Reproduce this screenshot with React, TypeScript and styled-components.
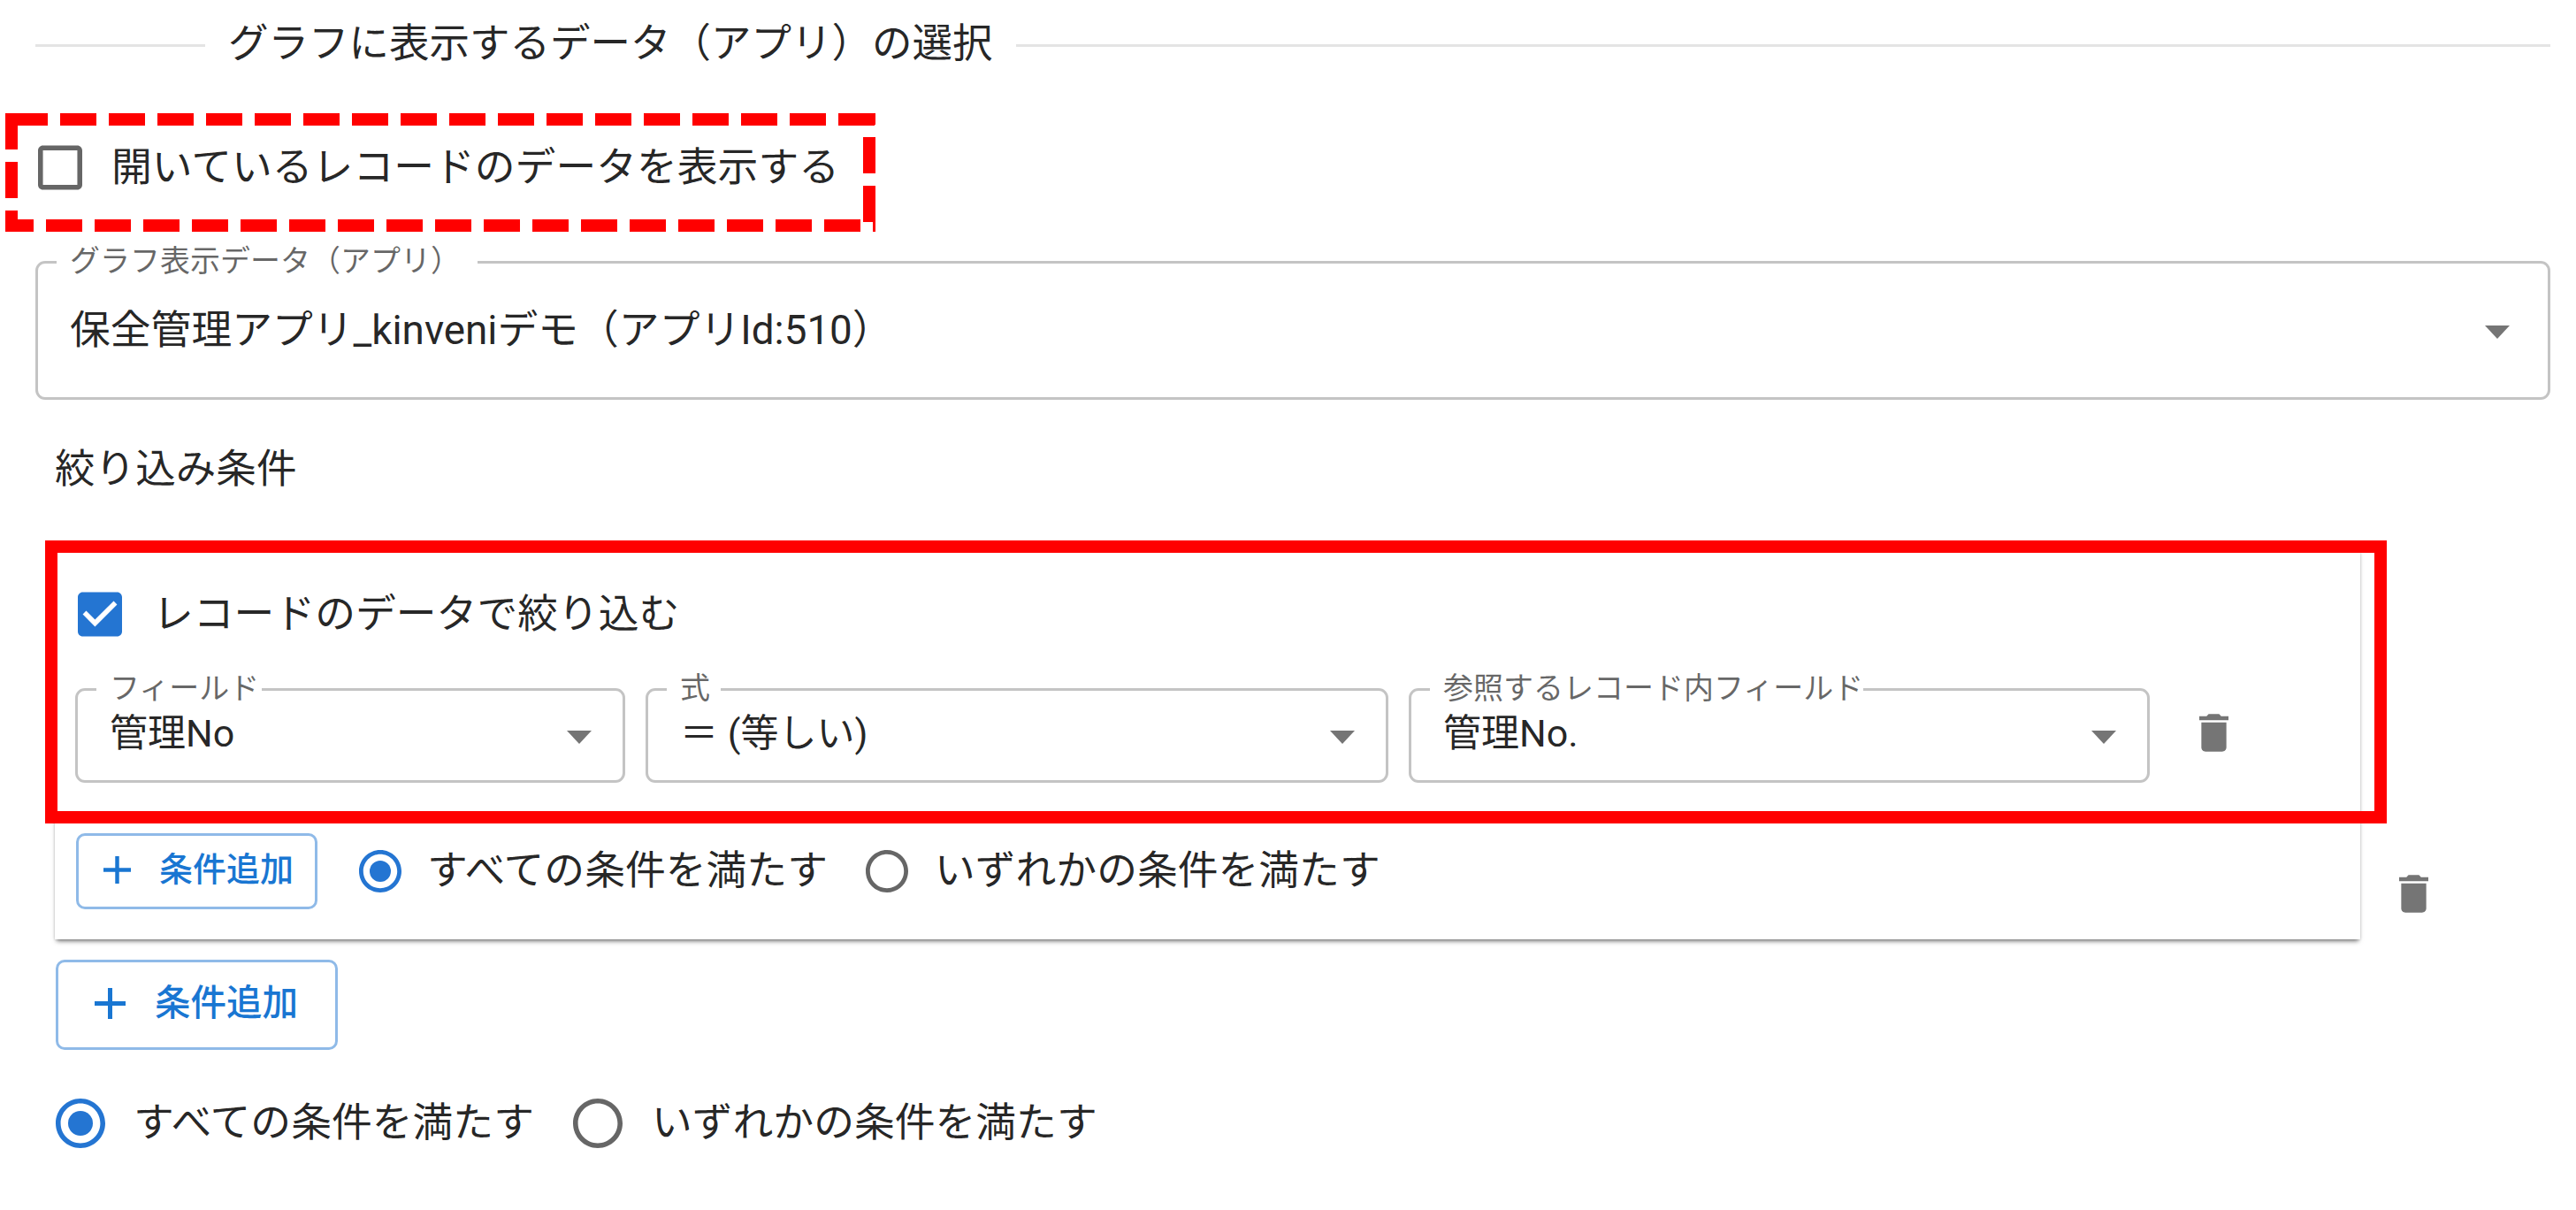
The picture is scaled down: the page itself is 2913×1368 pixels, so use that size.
import React from "react";
import styled, { createGlobalStyle } from "styled-components";

const GlobalStyle = createGlobalStyle`
  html, body {
    margin: 0;
    padding: 0;
    background: #fff;
  }
  body {
    font-family: Roboto, "Noto Sans CJK JP", "Noto Sans", sans-serif;
    color: rgba(0, 0, 0, 0.87);
  }
`;

const Page = styled.div`
  width: 2913px;
  height: 1368px;
  box-sizing: border-box;
  padding: 0 29px 0 40px;
  overflow: hidden;
  display: flex;
  flex-direction: column;
`;

const SectionHeader = styled.div`
  height: 102px;
  display: flex;
  align-items: center;
`;

const HeaderLine = styled.div<{ $grow?: boolean }>`
  height: 3px;
  background: #e4e4e4;
  flex: ${(p) => (p.$grow ? "1" : "0 0 192px")};
`;

const HeaderTitle = styled.span`
  padding: 0 26px 12px;
  font-size: 45.5px;
  white-space: nowrap;
`;

const DashedFrame = styled.div`
  align-self: flex-start;
  margin: 26px 0 0 -34px;
  width: 984px;
  height: 134px;
  box-sizing: border-box;
  padding: 0 0 11px 37px;
  display: flex;
  align-items: center;
  gap: 33px;
  background:
    repeating-linear-gradient(90deg, #f00 7px, #f00 48px, transparent 48px, transparent 62px) top left / 100% 14px no-repeat,
    repeating-linear-gradient(90deg, #f00 -9px, #f00 32px, transparent 32px, transparent 46px) bottom left / 100% 14px no-repeat,
    repeating-linear-gradient(180deg, #f00 0, #f00 41px, transparent 41px, transparent 55px) top left / 14px 100% no-repeat,
    repeating-linear-gradient(180deg, #f00 27px, #f00 68px, transparent 68px, transparent 82px) top right / 14px 100% no-repeat;
`;

const Label = styled.span`
  font-size: 45.8px;
  line-height: 46px;
  white-space: nowrap;
`;

const MainFieldWrap = styled.div`
  margin-top: 33px;
`;

const SelectBox = styled.div<{ $width?: number; $height: number; $padRight: number }>`
  position: relative;
  box-sizing: border-box;
  flex: none;
  width: ${(p) => (p.$width ? `${p.$width}px` : "auto")};
  height: ${(p) => p.$height}px;
  border: 3px solid #c4c4c4;
  border-radius: 11px;
  padding: 0 ${(p) => p.$padRight - 3}px 0 36px;
  display: flex;
  align-items: center;
  justify-content: space-between;
`;

const FloatingLabel = styled.span<{ $notchRight: number }>`
  position: absolute;
  left: 21px;
  top: -26px;
  padding: 0 ${(p) => p.$notchRight}px 0 15px;
  background: linear-gradient(#fff, #fff) bottom / 100% 50% no-repeat;
  font-size: 34px;
  line-height: 46px;
  color: rgba(0, 0, 0, 0.6);
  white-space: nowrap;
`;

const SelectValue = styled.span<{ $size: number; $lift: number }>`
  font-size: ${(p) => p.$size}px;
  line-height: 50px;
  padding-bottom: ${(p) => p.$lift}px;
  white-space: nowrap;
`;

const Caret = styled.span`
  flex: none;
  width: 0;
  height: 0;
  margin-top: 3px;
  border-left: 14.5px solid transparent;
  border-right: 14.5px solid transparent;
  border-top: 15px solid #757575;
`;

const Heading = styled.div`
  margin: 49px 0 0 22px;
  height: 60px;
  line-height: 60px;
  font-size: 45.6px;
`;

const RuleRow = styled.div`
  margin: 59px 0 0 22px;
  display: flex;
  gap: 44px;
`;

const RuleCard = styled.div`
  position: relative;
  box-sizing: border-box;
  width: 2607px;
  height: 442px;
  padding: 49px 0 0 26px;
  background: #fff;
  box-shadow: 0 4px 5px -2px rgba(0, 0, 0, 0.55), 0 0 3px rgba(0, 0, 0, 0.14);
  display: flex;
  flex-direction: column;
`;

const RedFrame = styled.div`
  position: absolute;
  left: -11px;
  right: -30px;
  top: -9px;
  height: 320px;
  box-sizing: border-box;
  border: 14px solid #f00;
  pointer-events: none;
`;

const CheckRow = styled.div`
  display: flex;
  align-items: center;
  gap: 35px;
  height: 51px;
`;

const SelectRow = styled.div`
  margin: 58px 0 0 -3px;
  display: flex;
  align-items: center;
  gap: 23px;
`;

const TrashButton = styled.span<{ $outer?: boolean }>`
  flex: none;
  display: flex;
  align-self: ${(p) => (p.$outer ? "flex-end" : "center")};
  margin: ${(p) => (p.$outer ? "0 0 30px 0" : "0 0 6px 33px")};
`;

const ActionRow = styled.div`
  margin: 57px 0 0 -2px;
  display: flex;
  align-items: center;
`;

const AddButton = styled.div<{ $width: number; $height: number; $pad: number; $gap: number; $size: number }>`
  flex: none;
  box-sizing: border-box;
  width: ${(p) => p.$width}px;
  height: ${(p) => p.$height}px;
  padding: 0 0 3px ${(p) => p.$pad}px;
  border: 3px solid #8fbae8;
  border-radius: 10px;
  display: flex;
  align-items: center;
  gap: ${(p) => p.$gap}px;
  color: #1976d2;
  font-size: ${(p) => p.$size}px;
  font-weight: 500;
  white-space: nowrap;
`;

const ButtonText = styled.span`
  line-height: 46px;
  padding-bottom: 1px;
`;

const OuterAddWrap = styled.div`
  margin: 23px 0 0 23px;
`;

const RadioGroup = styled.div<{ $left: number; $top: number }>`
  margin: ${(p) => p.$top}px 0 0 ${(p) => p.$left}px;
  display: flex;
  align-items: center;
`;

const RadioItem = styled.div<{ $gap: number; $after: number }>`
  display: flex;
  align-items: center;
  gap: ${(p) => p.$gap}px;
  margin-right: ${(p) => p.$after}px;
`;

const CheckIcon: React.FC<{ checked?: boolean }> = ({ checked }) =>
  checked ? (
    <svg width="50" height="51" viewBox="3 3 18 18" fill="#2475d2">
      <path d="M19 3H5c-1.11 0-2 .9-2 2v14c0 1.1.89 2 2 2h14c1.11 0 2-.9 2-2V5c0-1.1-.89-2-2-2zm-9 14l-5-5 1.41-1.41L10 14.17l7.59-7.59L19 8l-9 9z" />
    </svg>
  ) : (
    <svg width="50" height="51" viewBox="3 3 18 18" fill="#666">
      <path d="M19 5v14H5V5h14m0-2H5c-1.1 0-2 .9-2 2v14c0 1.1.9 2 2 2h14c1.1 0 2-.9 2-2V5c0-1.1-.9-2-2-2z" />
    </svg>
  );

const RadioIcon: React.FC<{ checked?: boolean; size: number }> = ({ checked, size }) => (
  <svg width={size} height={size} viewBox="2 2 20 20" fill={checked ? "#2475d2" : "#666"}>
    <path d="M12 2C6.48 2 2 6.48 2 12s4.48 10 10 10 10-4.48 10-10S17.52 2 12 2zm0 18c-4.42 0-8-3.58-8-8s3.58-8 8-8 8 3.58 8 8-3.58 8-8 8z" />
    {checked && <circle cx="12" cy="12" r="5" />}
  </svg>
);

const PlusIcon: React.FC<{ size: number }> = ({ size }) => (
  <svg width={size} height={size} viewBox="5 5 14 14" fill="currentColor">
    <path d="M19 13h-6v6h-2v-6H5v-2h6V5h2v6h6v2z" />
  </svg>
);

const TrashIcon: React.FC = () => (
  <svg width="33" height="43" viewBox="5 3 14 18" fill="#757575">
    <path d="M6 19c0 1.1.9 2 2 2h8c1.1 0 2-.9 2-2V7H6v12zM19 4h-3.5l-1-1h-5l-1 1H5v2h14V4z" />
  </svg>
);

type FieldProps = {
  label: string;
  value: string;
  width?: number;
  height?: number;
  padRight?: number;
  notchRight?: number;
  size?: number;
  lift?: number;
};

const Field: React.FC<FieldProps> = ({
  label,
  value,
  width,
  height = 107,
  padRight = 38,
  notchRight = 3,
  size = 43,
  lift = 5,
}) => (
  <SelectBox $width={width} $height={height} $padRight={padRight}>
    <FloatingLabel $notchRight={notchRight}>{label}</FloatingLabel>
    <SelectValue $size={size} $lift={lift}>
      {value}
    </SelectValue>
    <Caret />
  </SelectBox>
);

export default function App() {
  return (
    <>
      <GlobalStyle />
      <Page>
        <SectionHeader>
          <HeaderLine />
          <HeaderTitle>グラフに表示するデータ（アプリ）の選択</HeaderTitle>
          <HeaderLine $grow />
        </SectionHeader>

        <DashedFrame>
          <CheckIcon />
          <Label>開いているレコードのデータを表示する</Label>
        </DashedFrame>

        <MainFieldWrap>
          <Field
            label="グラフ表示データ（アプリ）"
            value="保全管理アプリ_kinveniデモ（アプリId:510）"
            height={157}
            padRight={46}
            notchRight={19}
            size={45.8}
            lift={0}
          />
        </MainFieldWrap>

        <Heading>絞り込み条件</Heading>

        <RuleRow>
          <RuleCard>
            <CheckRow>
              <CheckIcon checked />
              <Label>レコードのデータで絞り込む</Label>
            </CheckRow>
            <SelectRow>
              <Field label="フィールド" value="管理No" width={622} />
              <Field label="式" value="＝ (等しい)" width={840} notchRight={12} />
              <Field label="参照するレコード内フィールド" value="管理No." width={838} notchRight={0} />
              <TrashButton>
                <TrashIcon />
              </TrashButton>
            </SelectRow>
            <ActionRow>
              <AddButton $width={273} $height={86} $pad={28} $gap={32} $size={38}>
                <PlusIcon size={31} />
                <ButtonText>条件追加</ButtonText>
              </AddButton>
              <RadioGroup $left={47} $top={0}>
                <RadioItem $gap={29} $after={43}>
                  <RadioIcon checked size={48} />
                  <Label>すべての条件を満たす</Label>
                </RadioItem>
                <RadioItem $gap={30} $after={0}>
                  <RadioIcon size={48} />
                  <Label>いずれかの条件を満たす</Label>
                </RadioItem>
              </RadioGroup>
            </ActionRow>
            <RedFrame />
          </RuleCard>
          <TrashButton $outer>
            <TrashIcon />
          </TrashButton>
        </RuleRow>

        <OuterAddWrap>
          <AddButton $width={319} $height={102} $pad={41} $gap={33} $size={40.5}>
            <PlusIcon size={35} />
            <ButtonText>条件追加</ButtonText>
          </AddButton>
        </OuterAddWrap>

        <RadioGroup $left={23} $top={55}>
          <RadioItem $gap={32} $after={44}>
            <RadioIcon checked size={56} />
            <Label>すべての条件を満たす</Label>
          </RadioItem>
          <RadioItem $gap={33} $after={0}>
            <RadioIcon size={56} />
            <Label>いずれかの条件を満たす</Label>
          </RadioItem>
        </RadioGroup>
      </Page>
    </>
  );
}
